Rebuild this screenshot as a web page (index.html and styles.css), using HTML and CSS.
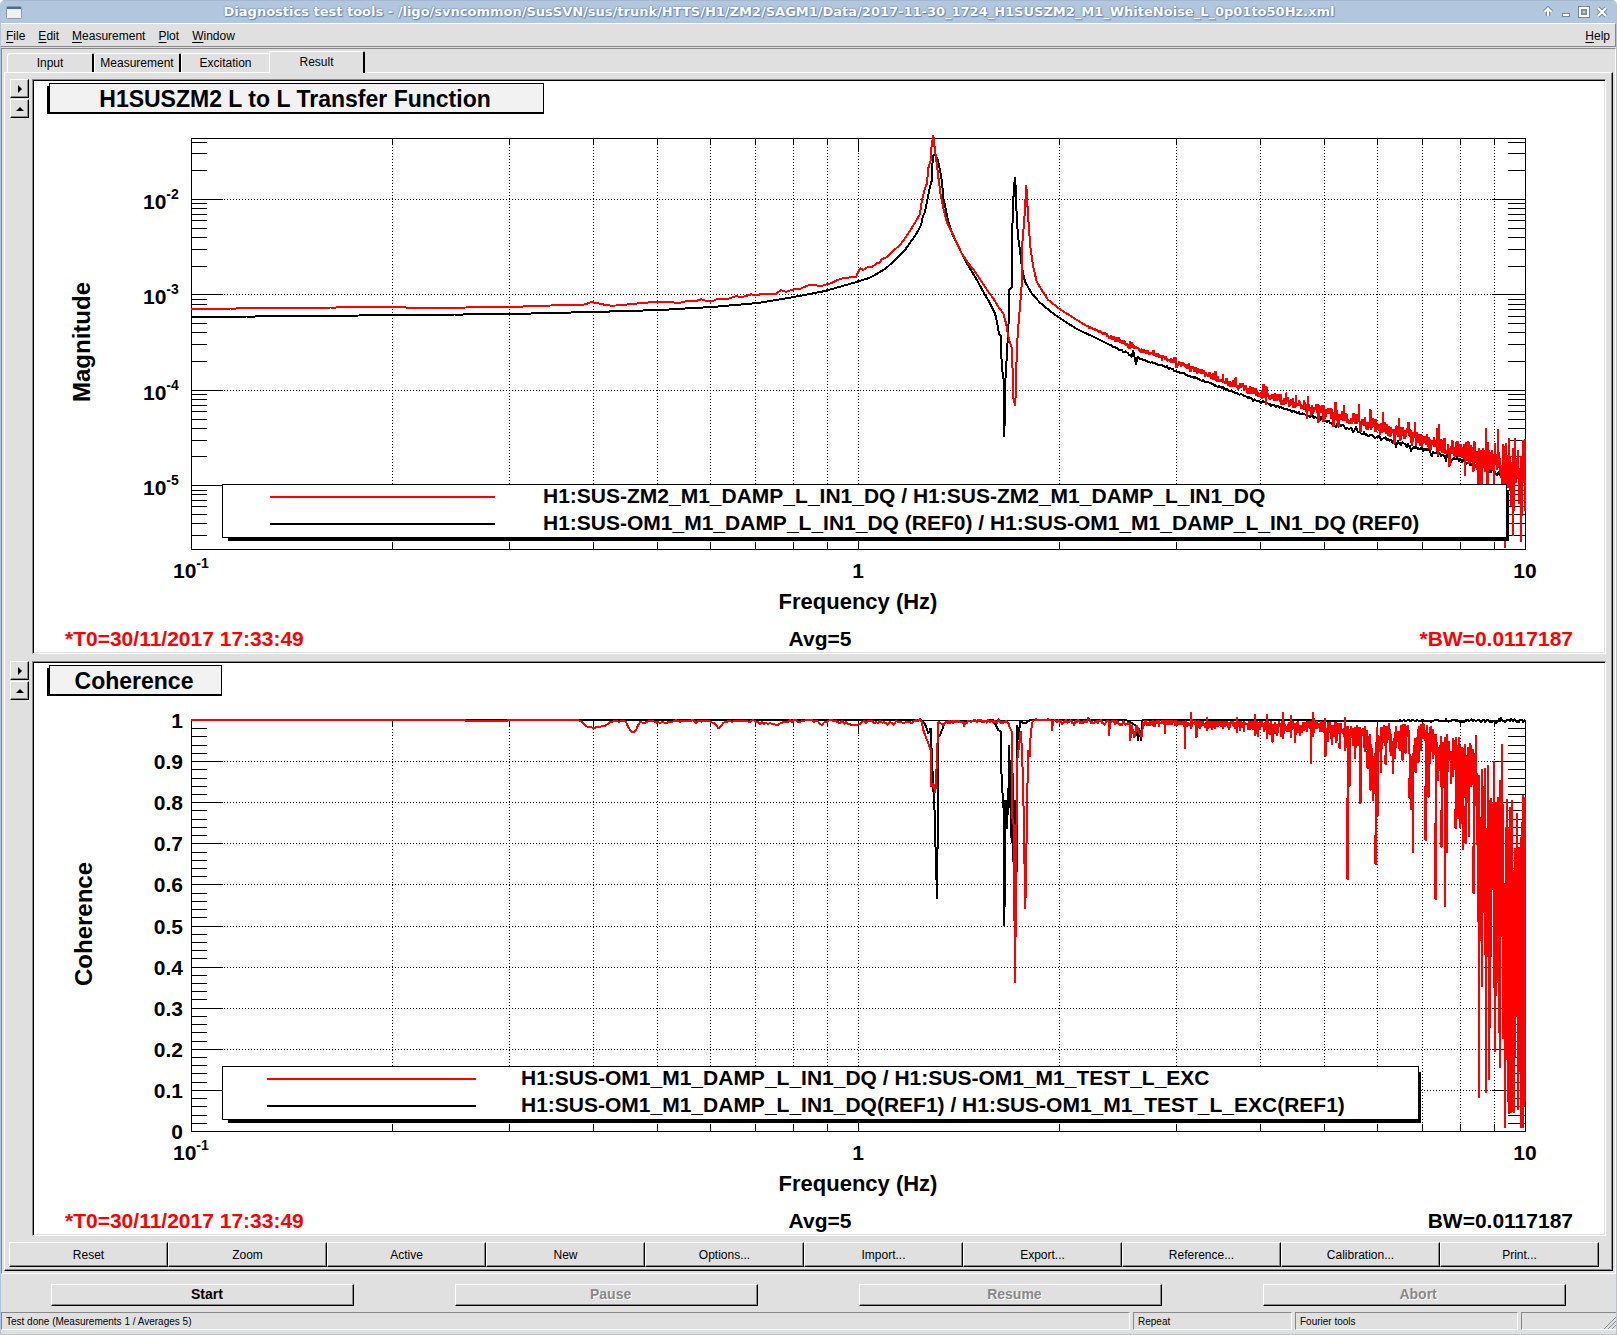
FILE: index.html
```html
<!DOCTYPE html>
<html lang="en">

<head>
    <meta charset="UTF-8">
    <meta name="viewport" content="width=device-width, initial-scale=1.0">
    <title>Diagnostics test tools</title>
    <link rel="stylesheet" href="styles.css">
</head>

<body>

    <div class="window">
        <header class="titlebar">
            <svg class="app-icon" viewBox="0 0 16 13" aria-hidden="true">
                <rect x="0.5" y="0.5" width="15" height="12" rx="1" fill="#f0f0ec" stroke="#8d9aa5" />
                <rect x="1" y="1" width="14" height="2" fill="#3c6cb4" />
            </svg>
            <h1>Diagnostics test tools - /ligo/svncommon/SusSVN/sus/trunk/HTTS/H1/ZM2/SAGM1/Data/2017-11-30_1724_H1SUSZM2_M1_WhiteNoise_L_0p01to50Hz.xml</h1>
            <div class="window-buttons">
                <button type="button" aria-label="Shade">
                    <svg viewBox="0 0 12 12"><path class="halo" d="M6 10V3M2.500 6L6 2.500L9.500 6" /><path d="M6 10V3M2.500 6L6 2.500L9.500 6" /></svg>
                </button>
                <button type="button" aria-label="Minimize">
                    <svg viewBox="0 0 12 12"><path class="halo" d="M2 9H10" /><path d="M3 9H9" /></svg>
                </button>
                <button type="button" aria-label="Maximize">
                    <svg viewBox="0 0 12 12"><path class="halo" d="M2 2H10V10H2Z" /><path d="M2 2H10V10H2Z" /><path class="thin" d="M4 4H8V8H4Z" /></svg>
                </button>
                <button type="button" aria-label="Close">
                    <svg viewBox="0 0 12 12"><path class="halo" d="M2 2L10 10M10 2L2 10" /><path d="M2 2L10 10M10 2L2 10" /></svg>
                </button>
            </div>
        </header>

        <nav class="menubar">
            <button type="button"><u>F</u>ile</button>
            <button type="button"><u>E</u>dit</button>
            <button type="button"><u>M</u>easurement</button>
            <button type="button"><u>P</u>lot</button>
            <button type="button"><u>W</u>indow</button>
            <button type="button" class="help"><u>H</u>elp</button>
        </nav>

        <main class="content">
            <div class="tabs" role="tablist">
                <button type="button" role="tab">Input</button>
                <button type="button" role="tab">Measurement</button>
                <button type="button" role="tab">Excitation</button>
                <button type="button" role="tab" class="active" aria-selected="true">Result</button>
            </div>

            <div class="panel">
                <section class="plot-row">
                    <div class="side">
                        <button type="button" aria-label="Show options"><svg viewBox="0 0 8 8"><path d="M2 0V8L6 4Z" /></svg></button>
                        <button type="button" aria-label="Expand"><svg viewBox="0 0 8 8"><path d="M0 6H8L4 2Z" /></svg></button>
                    </div>
                    <div class="canvas">
                        <!-- origin is the top left corner of the axes frame -->
                        <svg class="plot" viewBox="-157 -57 1570 571">
                            <rect class="shadow" x="-144" y="-52" width="497" height="28" />
                            <rect class="title-box" x="-142" y="-55" width="494" height="29" />
                            <text class="title" x="104" y="-31">H1SUSZM2 L to L Transfer Function</text>

                            <g id="magAxes"></g>
                            <path id="magRef" class="trace black" />
                            <path id="magNew" class="trace red" />

                            <rect class="shadow" x="37" y="352" width="1281" height="51" />
                            <rect class="legend-box" x="31" y="346" width="1284" height="53" />
                            <path class="trace red" d="M79 359H304" />
                            <path class="trace black" d="M79 386H304" />
                            <text x="352" y="365">H1:SUS-ZM2_M1_DAMP_L_IN1_DQ / H1:SUS-ZM2_M1_DAMP_L_IN1_DQ</text>
                            <text x="352" y="392">H1:SUS-OM1_M1_DAMP_L_IN1_DQ (REF0) / H1:SUS-OM1_M1_DAMP_L_IN1_DQ (REF0)</text>

                            <text class="y-title" transform="translate(-101 204) rotate(-90)">Magnitude</text>
                            <text class="x-title" x="667" y="471">Frequency (Hz)</text>
                            <text class="alert" x="-126" y="508">*T0=30/11/2017 17:33:49</text>
                            <text class="middle" x="629" y="508">Avg=5</text>
                            <text class="alert end" x="1382" y="508">*BW=0.0117187</text>
                        </svg>
                    </div>
                </section>

                <section class="plot-row">
                    <div class="side">
                        <button type="button" aria-label="Show options"><svg viewBox="0 0 8 8"><path d="M2 0V8L6 4Z" /></svg></button>
                        <button type="button" aria-label="Expand"><svg viewBox="0 0 8 8"><path d="M0 6H8L4 2Z" /></svg></button>
                    </div>
                    <div class="canvas">
                        <svg class="plot" viewBox="-157 -57 1570 571">
                            <rect class="shadow" x="-144" y="-52" width="175" height="28" />
                            <rect class="title-box" x="-142" y="-55" width="172" height="29" />
                            <text class="title" x="-57" y="-31">Coherence</text>

                            <g id="cohAxes"></g>
                            <path id="cohRef" class="trace black" />
                            <path id="cohNew" class="trace red" />

                            <rect class="shadow" x="37" y="352" width="1193" height="51" />
                            <rect class="legend-box" x="31" y="346" width="1196" height="53" />
                            <path class="trace red" d="M76 359H285" />
                            <path class="trace black" d="M76 386H285" />
                            <text x="330" y="365">H1:SUS-OM1_M1_DAMP_L_IN1_DQ / H1:SUS-OM1_M1_TEST_L_EXC</text>
                            <text x="330" y="392">H1:SUS-OM1_M1_DAMP_L_IN1_DQ(REF1) / H1:SUS-OM1_M1_TEST_L_EXC(REF1)</text>

                            <text class="y-title" transform="translate(-99 204) rotate(-90)">Coherence</text>
                            <text class="x-title" x="667" y="471">Frequency (Hz)</text>
                            <text class="alert" x="-126" y="508">*T0=30/11/2017 17:33:49</text>
                            <text class="middle" x="629" y="508">Avg=5</text>
                            <text class="end" x="1382" y="508">BW=0.0117187</text>
                        </svg>
                    </div>
                </section>

                <div class="toolbar">
                    <button type="button">Reset</button>
                    <button type="button">Zoom</button>
                    <button type="button">Active</button>
                    <button type="button">New</button>
                    <button type="button">Options...</button>
                    <button type="button">Import...</button>
                    <button type="button">Export...</button>
                    <button type="button">Reference...</button>
                    <button type="button">Calibration...</button>
                    <button type="button">Print...</button>
                </div>
            </div>
        </main>

        <div class="actions">
            <button type="button">Start</button>
            <button type="button" disabled>Pause</button>
            <button type="button" disabled>Resume</button>
            <button type="button" disabled>Abort</button>
        </div>

        <footer class="statusbar">
            <span>Test done (Measurements 1 / Averages 5)</span>
            <span>Repeat</span>
            <span>Fourier tools</span>
            <span class="grip"><svg viewBox="0 0 12 12" aria-hidden="true"><path d="M0 12L12 0M4 12L12 4M8 12L12 8" /></svg></span>
        </footer>
    </div>

    <script src="plots.js"></script>

</body>

</html>
```
FILE: styles.css
```css
/* Basic styling */
* {
    box-sizing: border-box;
}

body {
    margin: 0;
    background: #ffffff;
    font-family: "Liberation Sans", Arial, sans-serif;
    font-size: 12px;
    color: #000000;
}

button {
    margin: 0;
    padding: 0;
    border: none;
    background: none;
    font: inherit;
    color: inherit;
}

.window {
    display: flex;
    flex-direction: column;
    min-height: 100vh;
    border: 1px solid #b0c4de;
    border-top: none;
    border-radius: 5px 5px 0 0;
    background: #e0e0e0;
    overflow: hidden;
}

/* Title bar */
.titlebar {
    display: flex;
    align-items: center;
    height: 23px;
    padding: 0 8px 0 5px;
    background: #b2c7de;
    border-top: 1px solid #a3b8d0;
}

.app-icon {
    width: 16px;
    height: 13px;
}

.titlebar h1 {
    flex: 1;
    margin: 0;
    padding-right: 6px;
    text-align: center;
    font-family: "DejaVu Sans", sans-serif;
    font-size: 13px;
    line-height: 22px;
    color: #ffffff;
    text-shadow: 0 0 1px #6384ab, 1px 1px 1px #6384ab, 0 0 2px #6384ab;
    white-space: nowrap;
}

.window-buttons {
    display: flex;
    gap: 6px;
}

.window-buttons button,
.window-buttons svg {
    display: block;
    width: 12px;
    height: 12px;
}

.window-buttons path {
    fill: none;
    stroke: #ffffff;
    stroke-width: 2;
}

.window-buttons .halo {
    stroke: #7389a0;
    stroke-width: 4;
}

.window-buttons .thin {
    stroke: #7389a0;
    stroke-width: 1;
}

/* Menu */
.menubar {
    display: flex;
    gap: 13px;
    height: 24px;
    padding: 1px 5px 0 5px;
    border-top: 1px solid #ffffff;
    border-right: 1px solid #888888;
    border-bottom: 1px solid #888888;
}

.menubar .help {
    margin-left: auto;
}

.menubar u {
    text-underline-offset: 2px;
}

/* Tabs and the raised panel */
.content {
    margin-top: 1px;
    padding: 2px;
    border: 1px solid #888888;
    border-right-color: #ffffff;
    border-bottom-color: #ffffff;
}

.tabs {
    display: flex;
    align-items: flex-end;
    height: 21px;
    padding-left: 3px;
}

.tabs button {
    width: 87px;
    height: 19px;
    border-top: 1px solid #ffffff;
    border-left: 1px solid #ffffff;
    border-right: 2px solid #000000;
    border-radius: 3px 2px 0 0;
}

.tabs button:nth-child(3) {
    width: 88px;
    border-right: none;
}

.tabs .active {
    width: 96px;
    height: 22px;
    margin-bottom: -1px;
    padding-bottom: 2px;
    background: #e0e0e0;
}

.panel {
    padding: 6px 6px 3px 4px;
    border-top: 1px solid #ffffff;
    border-left: 1px solid #ffffff;
    border-right: 1px solid #000000;
    border-bottom: 1px solid #000000;
    box-shadow: inset -1px -1px #888888;
}

.plot-row {
    display: flex;
    gap: 3px;
    margin-bottom: 7px;
    padding-left: 1px;
}

.side {
    display: flex;
    flex-direction: column;
    gap: 1px;
}

.side button,
.toolbar button,
.actions button {
    border: 1px solid #000000;
    border-top-color: #ffffff;
    border-left-color: #ffffff;
    box-shadow: inset -1px -1px #888888;
}

.side button {
    display: flex;
    align-items: center;
    justify-content: center;
    width: 19px;
    height: 19px;
}

.side svg {
    width: 8px;
    height: 8px;
}

.canvas {
    flex: 1;
    padding: 1px;
    border: 1px solid #888888;
    border-right-color: #ffffff;
    border-bottom-color: #ffffff;
    background: #ffffff;
    box-shadow: inset 1px 1px #000000, inset -1px -1px #e0e0e0;
}

/* Plots */
.plot {
    display: block;
    width: 100%;
    height: auto;
    font-size: 21px;
    font-weight: bold;
}

.plot path,
.plot rect {
    shape-rendering: crispEdges;
}

.axis-line {
    fill: none;
    stroke: #000000;
}

.grid-line {
    fill: none;
    stroke: #000000;
    stroke-dasharray: 1 2;
}

.trace {
    fill: none;
    stroke-width: 2;
    stroke-linejoin: bevel;
}

.red {
    stroke: #ff0000;
}

.black {
    stroke: #000000;
}

.title-box {
    fill: #f2f2f2;
    stroke: #000000;
}

.legend-box {
    fill: #ffffff;
    stroke: #000000;
}

.title {
    font-size: 23px;
    text-anchor: middle;
}

.x-title {
    font-size: 22px;
    text-anchor: middle;
}

.y-title {
    font-size: 24px;
    text-anchor: middle;
}

.middle {
    text-anchor: middle;
}

.end {
    text-anchor: end;
}

.alert {
    fill: #ff0000;
}

.exponent {
    font-size: 14px;
}

/* Bottom controls */
.toolbar {
    display: flex;
    margin-top: -1px;
    padding-right: 7px;
}

.toolbar button {
    flex: 1;
    height: 25px;
}

.actions {
    display: grid;
    grid-template-columns: repeat(4, 1fr);
    justify-items: center;
    padding: 10px 0 6px;
}

.actions button {
    width: 75%;
    height: 22px;
    padding: 0 0 2px 8px;
    font-size: 14px;
    font-weight: bold;
}

.actions button:disabled {
    color: #888888;
    text-shadow: 1px 1px #ffffff;
}

.statusbar {
    display: grid;
    grid-template-columns: 71fr 10fr 14fr 6fr;
    gap: 3px;
    padding-bottom: 3px;
    font-size: 10px;
}

.statusbar span {
    height: 18px;
    padding-left: 4px;
    border: 1px solid #888888;
    border-right-color: #ffffff;
    border-bottom-color: #ffffff;
    line-height: 17px;
}

.statusbar .grip {
    display: flex;
    align-items: flex-end;
    justify-content: flex-end;
    border-right: none;
}

.grip svg {
    width: 12px;
    height: 12px;
    fill: none;
    stroke: #888888;
}
```
FILE: plots.js
```js
const W = 1334;
const H = 411;

// fixed seed, the noise looks the same on every load
let seed = 20171130;
function rand() {
    seed = (seed * 1664525 + 1013904223) % 4294967296;
    return seed / 4294967296;
}

function xPos(freq) {
    return Math.round((Math.log10(freq) + 1) * W / 2);
}

function label(x, y, text, exponent) {
    if (exponent === undefined) {
        return `<text class="end" x="${x}" y="${y}">${text}</text>`;
    }
    return `<text x="${x}" y="${y}">${text}<tspan class="exponent" dy="-10">${exponent}</tspan></text>`;
}

// yTicks: list of {y, major}
function drawAxes(id, yTicks, labels) {
    let lines = `M0 0H${W}V${H}H0Z`;
    let grid = "";
    for (let decade = 0.1; decade < 5; decade *= 10) {
        for (let n = 2; n <= 10; n++) {
            const x = xPos(decade * n);
            if (x >= W) continue;
            const len = n === 10 ? 14 : 7;
            lines += `M${x} 0V${len}M${x} ${H}V${H - len}`;
            grid += `M${x} 0V${H}`;
        }
    }
    yTicks.forEach(t => {
        const len = t.major ? 32 : 16;
        lines += `M0 ${t.y}H${len}M${W} ${t.y}H${W - len - 1}`;
        if (t.major) grid += `M0 ${t.y}H${W}`;
    });
    labels += label(-18, 440, "10", "-1");
    labels += `<text class="middle" x="667" y="440">1</text>`;
    labels += `<text class="middle" x="1334" y="440">10</text>`;
    document.getElementById(id).innerHTML =
        `<path class="grid-line" d="${grid}"/><path class="axis-line" d="${lines}"/>${labels}`;
}

// Magnitude axis: 95.4 px per decade, 1e-2 at y = 61
const magTicks = [];
let magLabels = "";
for (let e = -6; e <= -2; e++) {
    for (let n = 1; n <= 9; n++) {
        const y = Math.round(61 - (e + Math.log10(n) + 2) * 95.4);
        if (y > 0 && y < H) magTicks.push({ y, major: n === 1 });
    }
    if (e > -6) magLabels += label(-48, Math.round(71 - (e + 2) * 95.4), "10", e);
}
drawAxes("magAxes", magTicks, magLabels);

const cohTicks = [];
let cohLabels = label(-8, 8, "1") + label(-8, 419, "0");
for (let i = 1; i < 50; i++) {
    const y = Math.round(H - i * H / 50);
    cohTicks.push({ y, major: i % 5 === 0 });
    if (i % 5 === 0) cohLabels += label(-8, y + 8, (i / 50).toFixed(1));
}
drawAxes("cohAxes", cohTicks, cohLabels);

function interp(pts, x) {
    let i = 1;
    while (i < pts.length - 1 && pts[i][0] < x) i++;
    const [x0, y0] = pts[i - 1];
    const [x1, y1] = pts[i];
    return y0 + (y1 - y0) * Math.min(1, (x - x0) / (x1 - x0));
}

function toPath(pts) {
    return "M" + pts.map(p => p[0].toFixed(1) + " " + p[1].toFixed(1)).join("L");
}

// resample with noise, amp is a list of [x, pixels]
function noisy(pts, amp, from, to, step) {
    const out = [];
    for (let x = from; x <= to; x += step) {
        const r = rand() * 2 - 1;
        const spike = rand() > 0.88 ? 2.2 : 0.9;
        out.push([x, interp(pts, x) + r * spike * interp(amp, x)]);
    }
    return out;
}

// peaks are stored at three times the plot scale
function peak(list, dx, dy) {
    return list.map(p => [dx + p[0] / 3, dy + p[1] / 3]);
}

const magRefPeak = peak([
    [0, 482], [25, 475], [50, 462], [80, 443], [110, 415], [135, 390], [150, 368], [165, 348], [180, 322],
    [186, 305], [188, 290], [195, 275], [203, 235], [210, 200], [216, 180], [218, 110], [226, 100], [235, 125], [240, 150],
    [246, 185], [250, 235], [258, 270], [265, 305], [280, 350], [300, 390], [320, 430], [345, 470], [370, 515],
    [390, 550], [405, 580], [412, 610], [417, 643], [423, 648], [425, 740], [431, 780], [433, 952], [436, 785],
    [441, 700], [446, 600], [447, 510], [456, 500], [457, 325], [461, 215], [465, 170], [468, 215], [470, 295],
    [475, 355], [480, 390], [486, 445], [495, 485], [515, 520], [540, 548], [570, 573], [600, 595], [650, 627],
    [700, 650], [750, 675]
], 669, -18);

const magNewPeak = peak([
    [0, 445], [10, 450], [25, 440], [35, 442], [50, 430], [58, 430], [65, 418], [80, 412], [100, 392], [120, 375],
    [135, 355], [150, 332], [165, 308], [180, 282], [186, 240], [195, 205], [201, 190], [205, 145], [212, 120],
    [214, 85], [220, 45], [224, 85], [230, 130], [236, 180], [242, 225], [250, 265], [260, 305], [275, 335],
    [290, 368], [305, 400], [325, 430], [345, 455], [365, 485], [385, 515], [400, 535], [415, 560], [430, 580],
    [438, 610], [446, 655], [456, 685], [460, 835], [466, 858], [469, 740], [473, 640], [480, 560], [485, 495],
    [487, 370], [493, 300], [499, 195], [502, 250], [507, 330], [512, 390], [520, 440], [530, 485], [545, 510],
    [565, 540], [600, 568], [640, 593], [680, 618]
], 669, -18);

const magRefLow = [[0, 179], [118, 178], [319, 176], [402, 174], [469, 172], [521, 169], [567, 165], [603, 159], [634, 153], [669, 143]];
const magRefHigh = [[919, 207], [950, 221], [969, 227], [1067, 263], [1109, 275], [1134, 283], [1186, 299], [1232, 312], [1269, 322], [1300, 333], [1334, 341]];
document.getElementById("magRef").setAttribute("d", toPath([
    ...noisy(magRefLow, [[0, 0], [669, 0]], 0, 668, 8),
    ...magRefPeak,
    ...noisy(magRefHigh, [[919, 1], [937, 1], [944, 4], [952, 1], [1100, 1], [1150, 2], [1300, 3], [1334, 5]], 920, 1334, 1)
]));

const magNewLow = [[0, 171], [82, 170], [200, 169], [230, 170], [319, 169], [371, 167], [392, 167], [400, 164], [410, 166],
    [423, 168], [450, 165], [469, 164], [500, 164], [510, 161], [520, 163], [545, 159], [564, 158], [603, 152], [620, 147], [634, 148], [645, 142], [665, 138], [669, 130]];
const magNewHigh = [[896, 188], [909, 194], [922, 200], [936, 206], [949, 212], [969, 218], [1026, 240], [1067, 255], [1109, 267], [1134, 274], [1186, 288], [1232, 303], [1269, 312], [1302, 321], [1334, 330]];
const magNewAmp = [[896, 1], [917, 2], [918, 5], [921, 2], [936, 3], [939, 6], [943, 2], [969, 2], [1067, 5], [1134, 7], [1186, 8], [1232, 9], [1270, 10], [1285, 15], [1312, 20]];
document.getElementById("magNew").setAttribute("d", toPath([
    ...noisy(magNewLow, [[0, 0], [350, 0], [500, 1], [669, 1]], 0, 668, 5),
    ...magNewPeak,
    ...noisy(magNewHigh, magNewAmp, 897, 1286, 0.5),
    [1287, 350], [1288, 310], [1289, 350], [1290, 312], [1291, 350],
    ...noisy(magNewHigh, magNewAmp, 1292, 1302, 0.5),
    [1303, 350], [1304, 305],
    ...noisy(magNewHigh, magNewAmp, 1305, 1312, 0.5),
    [1313, 310], [1314, 410], [1315, 305], [1317, 350], [1318, 300], [1320, 368], [1322, 310], [1322, 398],
    [1324, 300], [1325, 345], [1327, 312], [1328, 366], [1330, 318], [1330, 404], [1332, 302], [1333, 345], [1334, 301], [1334, 373]
]));

// Coherence of the reference measurement
const cohRef = peak([
    [185, 61], [195, 72], [205, 100], [212, 85], [217, 200], [220, 265], [224, 340], [228, 500], [232, 598],
    [234, 110], [240, 105], [248, 85], [256, 66], [400, 61], [415, 90], [422, 95], [424, 210], [430, 325],
    [432, 300], [433, 678], [437, 300], [441, 388], [446, 250], [448, 135], [450, 280], [455, 430], [459, 220],
    [460, 485], [465, 300], [471, 515], [472, 75], [476, 120], [480, 65], [495, 70], [510, 61], [800, 61],
    [815, 68], [830, 80], [834, 123], [838, 85], [843, 123], [847, 61]
], 669, -20);
document.getElementById("cohRef").setAttribute("d", toPath([
    [0, 0], ...cohRef,
    ...noisy([[950, 0], [1334, 1]], [[950, 0], [1200, 0], [1220, 1], [1334, 2]], 952, 1334, 1)
]));

// Coherence of the new measurement
const flat = [[0, 0], [1334, 0]];
const cohLow = [[386, 0], [390, 1], [396, 7], [402, 8], [415, 5], [422, 1], [434, 1], [442, 14], [448, 3], [458, 1], [475, 3], [490, 1],
    [518, 1], [523, 3], [528, 10], [533, 2], [560, 1], [587, 5], [592, 1], [625, 1], [632, 5], [638, 1], [655, 3], [665, 5], [672, 2], [700, 2], [731, 2]];
const cohPeak1 = peak([[185, 66], [190, 90], [197, 110], [205, 130], [212, 150], [214, 260], [220, 250], [226, 278], [230, 195], [235, 65], [250, 75], [258, 66]], 669, -20);
const cohPeak2 = peak([
    [445, 68], [450, 85], [456, 95], [457, 355], [462, 380], [463, 615], [466, 848], [468, 400], [470, 365],
    [472, 180], [478, 130], [482, 92], [486, 150], [490, 280], [492, 405], [496, 628], [500, 400], [502, 275],
    [505, 150], [509, 170], [512, 100], [518, 62]
], 669, -20);
const cohPeak3 = peak([[810, 70], [811, 123], [815, 75], [823, 115], [830, 75], [838, 100], [845, 110], [850, 66]], 669, -20);

// [x, top, bottom] of the band at three times the plot scale
const band = [
    [0, 60, 85], [110, 60, 80], [200, 62, 92], [300, 62, 100], [400, 62, 118], [540, 62, 110], [556, 66, 150],
    [600, 66, 140], [620, 76, 160], [645, 76, 155], [680, 76, 200], [692, 100, 240], [703, 190, 410], [710, 75, 400],
    [722, 75, 280], [728, 75, 150], [745, 65, 170], [757, 100, 220], [770, 75, 200], [785, 72, 150], [805, 72, 150],
    [812, 180, 430], [823, 120, 210], [832, 80, 190], [845, 68, 170], [862, 75, 280], [872, 75, 210], [890, 95, 230],
    [896, 105, 320], [915, 110, 330], [930, 95, 300], [942, 105, 300], [955, 90, 380], [965, 130, 420],
    [980, 130, 410], [992, 120, 290], [1002, 160, 400], [1008, 105, 430]
];
const spikes = [
    [73, 100], [133, 145], [168, 112], [352, 103], [380, 115], [395, 125], [463, 128], [511, 190], [556, 167],
    [598, 145], [621, 538], [628, 257], [643, 175], [660, 310], [682, 205], [690, 270], [705, 493], [735, 193],
    [757, 220], [785, 180], [795, 158], [808, 295], [817, 457], [825, 217], [833, 187], [855, 420], [864, 290],
    [886, 598], [903, 440], [913, 620], [919, 458], [946, 385], [967, 448], [975, 430], [985, 410], [1000, 580]
];
const tops = [[154, 35], [200, 52], [290, 50], [343, 42], [380, 42], [430, 36], [452, 45], [520, 36], [555, 55], [613, 52]];
const cohBand = [];
let nextSpike = 0;
let nextTop = 0;
for (let x = 0; x <= 1008; x += 2) {
    const top = interp(band.map(b => [b[0], b[1]]), x);
    const bottom = interp(band.map(b => [b[0], b[2]]), x);
    const jitter = (bottom - top) * 0.8;
    cohBand.push([x, top + rand() * rand() * jitter]);
    cohBand.push([x + 1, bottom - Math.sqrt(rand()) * jitter]);
    if (nextSpike < spikes.length && x >= spikes[nextSpike][0]) {
        cohBand.push([x, spikes[nextSpike][1]], [x + 2, spikes[nextSpike][1]], [x + 2, bottom]);
        nextSpike++;
    }
    if (nextTop < tops.length && x >= tops[nextTop][0]) {
        cohBand.push([x, tops[nextTop][1]], [x, bottom]);
        nextTop++;
    }
}

// above 8.6 Hz the samples jump over most of the range
const cohEnd = [
    [1009, 105], [1010, 435], [1012, 220], [1014, 665], [1017, 225], [1018, 1195], [1019, 350], [1022, 700], [1024, 350],
    [1026, 862], [1027, 208], [1030, 640], [1034, 205], [1034, 765], [1037, 385], [1038, 1180], [1041, 385],
    [1042, 640], [1045, 195], [1047, 1140], [1049, 300], [1051, 985], [1053, 295], [1054, 610], [1058, 310],
    [1060, 570], [1062, 183], [1063, 865], [1066, 305], [1066, 1055], [1069, 305], [1071, 850], [1074, 290], [1076, 1000],
    [1079, 240], [1080, 1103], [1082, 300], [1085, 712], [1087, 132], [1090, 1018], [1091, 550], [1094, 1020], [1096, 550], [1096, 1283],
    [1099, 380], [1100, 650], [1101, 297], [1104, 1205], [1106, 385], [1108, 1243], [1110, 320], [1113, 1240], [1116, 300], [1118, 1235],
    [1120, 510], [1121, 1240], [1124, 445], [1126, 1070], [1128, 445], [1130, 950], [1131, 340], [1134, 950], [1135, 440],
    [1135, 1230], [1138, 440], [1139, 1115], [1142, 410], [1144, 1285], [1145, 365], [1148, 1285], [1149, 285], [1151, 1220],
    [1154, 290], [1155, 1200], [1155, 785], [1155, 1205]
];

document.getElementById("cohNew").setAttribute("d", toPath([
    [0, 0], [274, 0], [275, 1], [316, 1], [317, 0], [386, 0],
    ...noisy(cohLow, [[386, 0], [400, 0.6], [731, 2]], 387, 730, 2),
    ...cohPeak1,
    ...noisy([[755, 2], [817, 2]], [[755, 2], [817, 2]], 756, 816, 1),
    ...cohPeak2,
    ...noisy(flat, [[842, 1], [860, 1]], 843, 860, 1),
    [861, 1], [861, 11], [862, 1],
    ...noisy([[862, 1], [938, 3]], [[862, 2], [938, 3]], 863, 917, 1),
    [918, 2], [918, 16], [919, 2],
    ...noisy([[862, 1], [938, 3]], [[862, 2], [938, 3]], 920, 938, 1),
    ...cohPeak3,
    ...peak(cohBand, 949, -20).filter(p => p[0] > 953),
    ...peak(cohEnd, 949, -20)
]));
```
